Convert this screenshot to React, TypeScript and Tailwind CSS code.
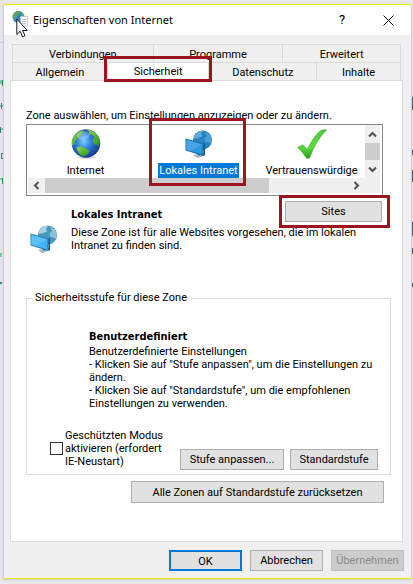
import { useState } from 'react';
import type { ReactNode } from 'react';
import clsx from 'clsx';

const BACK_TABS = ['Verbindungen', 'Programme', 'Erweitert'];

function Globe({ className }: { className?: string }) {
  return (
    <svg className={className} viewBox="0 0 30 30" aria-hidden="true">
      <defs>
        <radialGradient id="sea" cx="0.42" cy="0.42" r="0.6">
          <stop offset="0" stopColor="#7fd0fa" />
          <stop offset="0.45" stopColor="#2f7fe0" />
          <stop offset="1" stopColor="#16348f" />
        </radialGradient>
        <linearGradient id="land" x1="0" y1="0" x2="1" y2="1">
          <stop offset="0" stopColor="#8fd84a" />
          <stop offset="1" stopColor="#1f9420" />
        </linearGradient>
      </defs>
      <ellipse cx="15.5" cy="28.4" rx="9" ry="1.4" fill="#d4d4d4" />
      <circle cx="15" cy="14.5" r="14.2" fill="url(#sea)" />
      <path d="M3 7.5C5.500 3.500 8.500 1.800 11.500 1.200L13 2.500L10.500 4.500L11 6L8 7.500L6.500 10L4 12L3.500 15.500L1 16.500C0.500 13.500 1.200 10 3 7.500Z" fill="url(#land)" />
      <path d="M16 0.500C21 1 26 4.500 28 8.500L29 13L27.500 17.500L25 15.500L22.500 14.500L21.500 11L23.500 8L20.500 5.500L17.500 5.500L18.500 3Z" fill="url(#land)" />
      <path d="M5.500 18.500C8 17 11 17.500 13.500 19L18.500 21.500C18.500 24.500 15 27.500 11.500 27.200C8.500 25.500 6 22.500 5.500 18.500Z" fill="url(#land)" />
      <ellipse cx="12" cy="6.500" rx="6.500" ry="4" fill="#fff" opacity="0.25" />
    </svg>
  );
}

function IntranetIcon({ className, selected }: { className?: string; selected?: boolean }) {
  return (
    <svg className={className} viewBox="0 0 28 28" aria-hidden="true">
      <circle cx="17.500" cy="10" r="9.600" fill={selected ? '#2584c6' : '#4a97bd'} />
      <path d="M9.500 5.500C12 2 15 0.700 18 0.700L16 4L17 6.500L12.500 8.500L8.500 8.500Z" fill={selected ? '#62abd8' : '#a8d2e2'} />
      <path d="M20 2L25 4.500L27 9L25.500 14L23 12L20.500 12L19.500 8.500L22 6Z" fill={selected ? '#4d9ed5' : '#8cc3da'} />
      <path d="M8 25L18.500 22.500L20.500 25L12.500 28Z" fill="#9fb9c6" />
      <path d="M12.500 22L16.500 21.500V25L13 25.500Z" fill="#2d6f98" />
      <path d="M0.500 8.500L18.500 13.500V26L0.500 20.500Z" fill={selected ? '#176dae' : '#277fae'} />
      <path d="M1.300 9.700L17.300 14.200V24.400L1.300 19.700Z" fill={selected ? '#2a95e0' : '#3fb4f7'} />
      <path d="M1.300 9.700L17.300 14.200L6 21L1.300 19.700Z" fill="#fff" opacity="0.15" />
      <path d="M18.500 13.500L20 13V25L18.500 26Z" fill="#12568a" />
    </svg>
  );
}

function CheckIcon({ className }: { className?: string }) {
  return (
    <svg className={className} viewBox="0 0 30 30" aria-hidden="true">
      <defs>
        <linearGradient id="tick" x1="0" y1="0" x2="0" y2="1">
          <stop offset="0" stopColor="#4cc840" />
          <stop offset="0.6" stopColor="#5fdf3c" />
          <stop offset="1" stopColor="#25a01c" />
        </linearGradient>
      </defs>
      <path d="M0.700 18.500L5.500 16C7.500 17 9 19 10 21C14 13 19 5 24.500 1.200L29.500 0.800C22 8.500 16.500 18 12.500 29L9.500 29.200C7 25 4 21.500 0.700 18.500Z" fill="url(#tick)" stroke="#35a82b" strokeWidth="0.700" />
    </svg>
  );
}

// Titelsymbol mit Mauszeiger darüber
function TitleIcon() {
  return (
    <svg className="h-[28px] w-[17px] shrink-0" viewBox="0 0 17 28" aria-hidden="true">
      <circle cx="6.500" cy="7" r="6" fill="#3380cc" />
      <path d="M1 5C2 2.500 4 1 6.500 1L8 3L5 6L4 9L1.500 9.500Z" fill="#62a35a" />
      <path d="M8.500 1.500L11.500 4L12 7L9.500 7Z" fill="#4eb06d" />
      <path d="M8.500 6.500H15.500V16H8.500Z" fill="#f5f7f8" stroke="#bcc3c8" strokeWidth="0.800" />
      <path d="M10.500 9.500H14M10.500 11.500H14M10.500 13.500H14" stroke="#a9b2ba" strokeWidth="0.800" />
      <path d="M4.800 9V24.500L8.200 21.300L10.500 26.800L13 25.700L10.700 20.500H15.300Z" fill="#fff" stroke="#111827" />
    </svg>
  );
}

function Chevron({ d }: { d: string }) {
  return (
    <svg className="h-[9px] w-[9px]" viewBox="0 0 9 9" fill="none" stroke="#505050" strokeWidth="2" aria-hidden="true">
      <path d={d} />
    </svg>
  );
}

// Reste des Fensters, das hinter dem Dialog liegt
function Fringe() {
  return (
    <>
      <svg className="absolute left-0 top-0 h-[584px] w-[3px]" aria-hidden="true">
        <path d="M0 42.500H3" stroke="#d0d0d0" />
        <path d="M0 80H2V84H0ZM0 105H3V107H0ZM1 128H3V130H1ZM0 178H3V180H0ZM0 253H2V257H0Z" fill="#7cc4bd" />
        <path d="M2 80H3V86H2ZM1 103H2V109H1ZM0 127H1V133H0ZM1 153H3V154H1ZM1 158H3V159H1ZM1 154H2V158H1ZM2 178H3V184H2ZM0 282H2V284H0Z" fill="#3c8468" />
      </svg>
      <svg className="absolute right-0 top-0 h-[584px] w-[1px]" aria-hidden="true">
        <path d="M0 97H1V110H0ZM0 150H1V155H0ZM0 170H1V182H0ZM0 222H1V236H0ZM0 248H1V254H0ZM0 283H1V287H0Z" fill="#3b6a78" />
      </svg>
    </>
  );
}

function Tab({ active, onClick, children }: { active?: boolean; onClick?: () => void; children: ReactNode }) {
  return (
    <button
      type="button"
      role="tab"
      aria-selected={!!active}
      onClick={onClick}
      className={clsx(
        'relative h-[18px] border-r border-t border-[#d9d9d9] leading-[17px]',
        active ? 'bg-white' : 'bg-[#f0f0f0] pt-px'
      )}
    >
      {children}
    </button>
  );
}

function Button({ className, children, disabled }: { className?: string; children: ReactNode; disabled?: boolean }) {
  return (
    <button
      type="button"
      disabled={disabled}
      className={clsx(
        'whitespace-nowrap pt-[2px] text-center',
        disabled ? 'border border-[#bfbfbf] bg-[#cccccc] text-[#8a8a8a]' : 'bg-[#e1e1e1]',
        className
      )}
    >
      {children}
    </button>
  );
}

function Zone({ label, icon, selected, onClick }: { label: string; icon: ReactNode; selected: boolean; onClick: () => void }) {
  return (
    <button type="button" onClick={onClick} className="flex w-[113px] shrink-0 flex-col items-center pt-1">
      <span className="flex h-[30px] items-center">{icon}</span>
      <span className={clsx('mt-1 px-px leading-[15px]', selected && 'bg-[#0078d7] text-white')}>{label}</span>
    </button>
  );
}

export default function App() {
  const [zone, setZone] = useState('intranet');
  const [secureMode, setSecureMode] = useState(false);

  return (
    <div className="relative min-h-screen overflow-hidden bg-[#e8e8e8] pb-[3px] pl-[3px] pr-px pt-1 font-['Roboto','Liberation_Sans',sans-serif] text-[11px] text-black">
      <Fringe />
      <div className="border border-[#e3f000] bg-[#f0f0f0] shadow">
        {/* Titelleiste */}
        <header className="flex h-[30px] items-center bg-white pl-2 pr-[17px]">
          <div className="h-[20px]">
            <TitleIcon />
          </div>
          <h1 className="ml-1 flex-1 font-['Noto_Sans','Open_Sans',sans-serif]">Eigenschaften von Internet</h1>
          <button type="button" className="w-4 text-[13px]">?</button>
          <button type="button" aria-label="Schließen" className="ml-[33px]">
            <svg className="h-[11px] w-[11px]" viewBox="0 0 11 11" stroke="#000" fill="none">
              <path d="M0.500 0.500L10.500 10.500M10.500 0.500L0.500 10.500" />
            </svg>
          </button>
        </header>

        {/* Registerkarten */}
        <div role="tablist" className="pl-2 pr-[10px] pt-[9px]">
          <div className="grid grid-cols-[141fr_130fr_118fr] border-l border-[#d9d9d9]">
            {BACK_TABS.map((name) => (
              <Tab key={name}>{name}</Tab>
            ))}
          </div>
          <div className="grid grid-cols-[95fr_102fr_108fr_84fr] border-l border-[#d9d9d9]">
            <Tab>Allgemein</Tab>
            <Tab active>
              Sicherheit
              <span className="absolute -left-1 -right-1 -top-[7px] z-10 h-[26px] border-3 border-[#9c1420]" />
            </Tab>
            <Tab>Datenschutz</Tab>
            <Tab>Inhalte</Tab>
          </div>
        </div>

        <main className="ml-[6px] mr-2 border border-[#dadada] bg-white pb-[38px] pl-[15px] pr-[11px] pt-[27px]">
          <p className="leading-4">Zone auswählen, um Einstellungen anzuzeigen oder zu ändern.</p>

          {/* Zonenliste */}
          <div className="relative mr-2 border border-[#828790] pb-[2px] pr-[2px]">
            <div className="flex h-[53px]">
              <div className="flex flex-1 overflow-hidden pl-[2px]">
                <Zone
                  label="Internet"
                  icon={<Globe className="h-[30px] w-[30px]" />}
                  selected={zone === 'internet'}
                  onClick={() => setZone('internet')}
                />
                <Zone
                  label="Lokales Intranet"
                  icon={<IntranetIcon selected className="h-7 w-7" />}
                  selected={zone === 'intranet'}
                  onClick={() => setZone('intranet')}
                />
                <Zone
                  label="Vertrauenswürdige"
                  icon={<CheckIcon className="h-[30px] w-[30px]" />}
                  selected={zone === 'trusted'}
                  onClick={() => setZone('trusted')}
                />
              </div>
              <div className="flex w-[15px] flex-col bg-[#f0f0f0]">
                <button type="button" aria-label="Nach oben" className="flex h-[18px] items-center justify-center">
                  <Chevron d="M1 6.500L4.500 3L8 6.500" />
                </button>
                <div className="h-[17px] bg-[#cdcdcd]" />
                <button type="button" aria-label="Nach unten" className="flex h-[18px] items-center justify-center">
                  <Chevron d="M1 2.500L4.500 6L8 2.500" />
                </button>
              </div>
            </div>
            <div className="ml-px flex h-[15px] bg-[#f0f0f0] pr-[15px]">
              <button type="button" aria-label="Nach links" className="flex w-[17px] items-center justify-center">
                <Chevron d="M6.500 1L3 4.500L6.500 8" />
              </button>
              <div className="flex-1">
                <div className="h-full w-[74%] bg-[#cdcdcd]" />
              </div>
              <button type="button" aria-label="Nach rechts" className="flex w-[17px] items-center justify-center">
                <Chevron d="M2.500 1L6 4.500L2.500 8" />
              </button>
            </div>
            <span className="pointer-events-none absolute -top-[7px] left-[122px] h-[68px] w-[97px] border-3 border-[#9c1420]" />
          </div>

          {/* Beschreibung der Zone */}
          <section className="mt-[5px] flex">
            <div className="w-[45px] shrink-0 pl-1 pt-6">
              <IntranetIcon className="h-7 w-7" />
            </div>
            <div className="flex-1">
              <div className="mr-[9px] flex justify-between">
                <h2 className="pt-[6px] font-['DejaVu_Sans_Condensed','DejaVu_Sans',sans-serif] font-bold leading-4">
                  Lokales Intranet
                </h2>
                <div className="relative">
                  <Button className="h-[21px] w-[97px] border border-[#adadad]">Sites</Button>
                  <span className="pointer-events-none absolute -bottom-[5px] -left-[6px] -right-2 -top-[6px] border-3 border-[#9c1420]" />
                </div>
              </div>
              <p className="mt-[3px] leading-[13px]">
                Diese Zone ist für alle Websites vorgesehen, die im lokalen
                <br />
                Intranet zu finden sind.
              </p>
            </div>
          </section>

          {/* Sicherheitsstufe */}
          <fieldset className="mt-[38px] border border-[#dcdcdc] pb-1 pl-[23px] pr-3">
            <legend className="-ml-[17px] px-[2px] leading-[14px]">Sicherheitsstufe für diese Zone</legend>
            <div className="ml-[39px] mt-6">
              <h3 className="font-['DejaVu_Sans_Condensed','DejaVu_Sans',sans-serif] font-bold leading-4">
                Benutzerdefiniert
              </h3>
              <p className="leading-[13px]">
                Benutzerdefinierte Einstellungen
                <br />
                - Klicken Sie auf "Stufe anpassen", um die Einstellungen zu
                <br />
                ändern.
                <br />
                - Klicken Sie auf "Standardstufe", um die empfohlenen
                <br />
                Einstellungen zu verwenden.
              </p>
            </div>
            <div className="mt-[19px] flex items-end">
              <div className="flex flex-1 items-center gap-[2px] pb-[2px]">
                <input
                  id="secure-mode"
                  type="checkbox"
                  checked={secureMode}
                  onChange={(e) => setSecureMode(e.target.checked)}
                  className="h-[13px] w-[13px] shrink-0 appearance-none border border-[#333] bg-white checked:bg-[#0078d7]"
                />
                <label htmlFor="secure-mode" className="leading-[13px]">
                  Geschützten Modus
                  <br />
                  aktivieren (erfordert
                  <br />
                  IE-Neustart)
                </label>
              </div>
              <Button className="h-[21px] w-[104px] border border-[#adadad]">Stufe anpassen...</Button>
              <Button className="ml-[6px] h-[21px] w-[88px] border border-[#adadad]">Standardstufe</Button>
            </div>
          </fieldset>

          <div className="mr-[7px] mt-[6px] flex justify-end">
            <Button className="h-[22px] w-[253px] border border-[#adadad]">
              Alle Zonen auf Standardstufe zurücksetzen
            </Button>
          </div>
        </main>

        <footer className="flex justify-end gap-2 pb-[7px] pr-[7px] pt-2">
          <Button className="h-[21px] w-[73px] border-2 border-[#0078d7]">OK</Button>
          <Button className="h-[21px] w-[73px] border border-[#adadad]">Abbrechen</Button>
          <Button disabled className="h-[21px] w-[73px]">Übernehmen</Button>
        </footer>
      </div>
    </div>
  );
}
